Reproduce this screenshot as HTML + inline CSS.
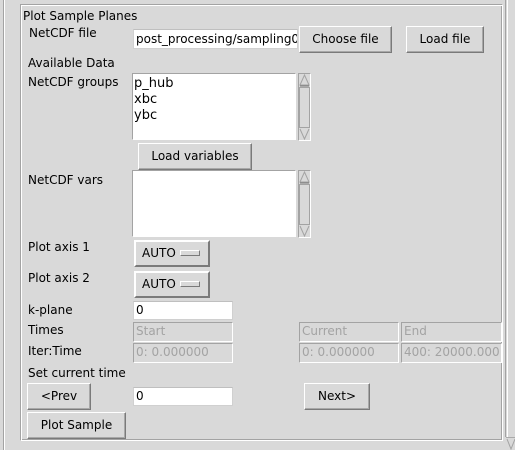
<!DOCTYPE html>
<html><head><meta charset="utf-8"><style>
*{box-sizing:border-box;margin:0;padding:0}
body{width:515px;height:450px;background:#d9d9d9;position:relative;overflow:hidden;font-family:"DejaVu Sans","Liberation Sans",sans-serif;font-size:12px;color:#000}
.a{position:absolute;white-space:nowrap}
.lbl{position:absolute;white-space:nowrap;line-height:14px}
.btn{position:absolute;border:1px solid;border-color:#fff #7a7a7a #7a7a7a #fff;background:#d9d9d9;text-align:center;line-height:24px;box-shadow:inset -1px -1px 0 #a8a8a8}
.ent{position:absolute;background:#fff;border:1px solid #d0d0d0;border-top-color:#bfbfbf;padding-left:2px;line-height:17px;overflow:hidden;white-space:nowrap}
.dis{position:absolute;background:#d9d9d9;border:1px solid;border-color:#a3a3a3 #fff #fff #a3a3a3;color:#a3a3a3;padding-left:2px;line-height:17px;overflow:hidden;white-space:nowrap}
.lb{position:absolute;background:#fff;border:1px solid;border-color:#a3a3a3 #fff #fff #a3a3a3;line-height:16px;padding-left:1px;padding-top:2px;font-size:13px}
.sb{position:absolute;border:1px solid;border-color:#a3a3a3 #fff #fff #a3a3a3;background:#d9d9d9}
.mb{position:absolute;border:2px solid;border-color:#fff #7a7a7a #7a7a7a #fff;background:#d9d9d9;line-height:22px;padding-left:6px}
.mb i{position:absolute;right:8px;top:8px;width:20px;height:6px;border:1px solid;border-color:#fff #7a7a7a #7a7a7a #fff}
</style></head><body>
<div class="a" style="left:3px;top:0;width:1px;height:450px;background:#a3a3a3"></div>
<div class="a" style="left:4px;top:0;width:1px;height:450px;background:#fff"></div>
<div class="a" style="left:505px;top:0;width:1px;height:437px;background:#a3a3a3"></div>
<div class="a" style="left:507px;top:0;width:1px;height:437px;background:#fff"></div>
<svg class="a" style="left:506px;top:437px" width="9" height="13"><path d="M0 0H9" stroke="#7a7a7a"/><path d="M1 2L5 12L9 2" fill="none" stroke="#a3a3a3"/></svg>
<div class="a" style="left:20px;top:4px;width:483px;height:437px;border:1px solid;border-color:#a3a3a3 #fff #fff #a3a3a3;box-shadow:inset 1px 1px 0 #fff,inset -1px -1px 0 #a3a3a3"></div>
<div class="lbl" style="left:23px;top:9px">Plot Sample Planes</div>
<div class="lbl" style="left:29px;top:26px">NetCDF file</div>
<div class="ent" style="left:133px;top:29px;width:165px;height:20px;padding-top:1px">post_processing/sampling0</div>
<div class="btn" style="left:299px;top:26px;width:93px;height:27px">Choose file</div>
<div class="btn" style="left:406px;top:26px;width:78px;height:27px">Load file</div>
<div class="lbl" style="left:28px;top:56px">Available Data</div>
<div class="lbl" style="left:28px;top:75px">NetCDF groups</div>
<div class="lb" style="left:132px;top:73px;width:164px;height:67px">p_hub<br>xbc<br>ybc</div>
<div class="sb" style="left:298px;top:73px;width:13px;height:68px"><svg width="11" height="66" style="display:block"><path d="M1 11L5.5 1L10 11Z" fill="none" stroke="#a3a3a3"/><path d="M1 12H10" stroke="#7a7a7a"/><rect x="0.5" y="13.5" width="10" height="40" fill="none" stroke="#a3a3a3"/><path d="M1 55L5.5 65L10 55" fill="none" stroke="#a3a3a3"/></svg></div>
<div class="btn" style="left:138px;top:143px;width:114px;height:27px">Load variables</div>
<div class="lbl" style="left:28px;top:173px">NetCDF vars</div>
<div class="lb" style="left:132px;top:170px;width:164px;height:67px"></div>
<div class="sb" style="left:298px;top:170px;width:13px;height:68px"><svg width="11" height="66" style="display:block"><path d="M1 11L5.5 1L10 11Z" fill="none" stroke="#a3a3a3"/><path d="M1 12H10" stroke="#7a7a7a"/><rect x="0.5" y="13.5" width="10" height="40" fill="none" stroke="#a3a3a3"/><path d="M1 55L5.5 65L10 55" fill="none" stroke="#a3a3a3"/></svg></div>
<div class="lbl" style="left:28px;top:240px">Plot axis 1</div>
<div class="mb" style="left:134px;top:240px;width:76px;height:27px">AUTO<i></i></div>
<div class="lbl" style="left:28px;top:271px">Plot axis 2</div>
<div class="mb" style="left:134px;top:271px;width:76px;height:27px">AUTO<i></i></div>
<div class="lbl" style="left:28px;top:303px">k-plane</div>
<div class="ent" style="left:133px;top:301px;width:100px;height:19px">0</div>
<div class="lbl" style="left:28px;top:323px">Times</div>
<div class="dis" style="left:133px;top:322px;width:100px;height:20px">Start</div>
<div class="dis" style="left:299px;top:322px;width:100px;height:20px">Current</div>
<div class="dis" style="left:401px;top:322px;width:101px;height:20px">End</div>
<div class="lbl" style="left:28px;top:344px">Iter:Time</div>
<div class="dis" style="left:133px;top:343px;width:100px;height:20px">0: 0.000000</div>
<div class="dis" style="left:299px;top:343px;width:100px;height:20px">0: 0.000000</div>
<div class="dis" style="left:401px;top:343px;width:101px;height:20px">400: 20000.000</div>
<div class="lbl" style="left:28px;top:366px">Set current time</div>
<div class="btn" style="left:27px;top:383px;width:64px;height:27px">&lt;Prev</div>
<div class="ent" style="left:133px;top:387px;width:100px;height:19px">0</div>
<div class="btn" style="left:304px;top:383px;width:66px;height:27px">Next&gt;</div>
<div class="btn" style="left:27px;top:412px;width:99px;height:27px">Plot Sample</div>
</body></html>
